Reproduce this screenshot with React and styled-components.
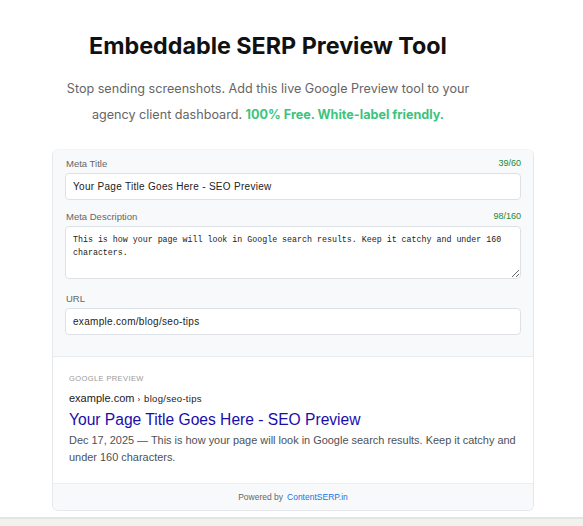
import styled, { createGlobalStyle } from "styled-components";

const GlobalStyle = createGlobalStyle`
  html, body {
    margin: 0;
    padding: 0;
    background: #ffffff;
  }
  body {
    font-family: Inter, "Liberation Sans", sans-serif;
  }
`;

const Page = styled.div`
  display: flex;
  flex-direction: column;
  min-height: 526px;
`;

const Hero = styled.header`
  width: 536px;
  text-align: center;
  padding-top: 30px;
`;

const Title = styled.h1`
  margin: 0;
  font-family: Inter, sans-serif;
  font-size: 23.3px;
  font-weight: 700;
  line-height: 32px;
  color: #111111;
`;

const Subtitle = styled.p`
  margin: 14px 0 0;
  font-family: Inter, sans-serif;
  font-size: 12.6px;
  line-height: 26px;
  color: #666666;
`;

const Highlight = styled.strong`
  color: #3cc47c;
  font-weight: 700;
`;

const Card = styled.section`
  width: 482px;
  box-sizing: border-box;
  margin: 21px 0 0 52px;
  border: 1px solid #e6e8eb;
  border-top-color: #f4f5f6;
  border-radius: 6px;
  overflow: hidden;
  background: #ffffff;
`;

const Form = styled.div`
  background: #f8f9fa;
  padding: 6px 12px 21px;
  border-bottom: 1px solid #e9ecef;
`;

const Field = styled.div`
  margin-top: ${(p) => p.$gap || 0}px;
`;

const LabelRow = styled.div`
  display: flex;
  justify-content: space-between;
  align-items: center;
  height: 14px;
  margin-bottom: 3px;
  padding-left: 1px;
`;

const Label = styled.label`
  font-family: "Liberation Sans", Arial, sans-serif;
  font-size: 9.5px;
  color: #666666;
`;

const Counter = styled.span`
  font-family: "Liberation Sans", Arial, sans-serif;
  font-size: 9px;
  color: #218838;
`;

const Input = styled.input`
  display: block;
  width: 100%;
  box-sizing: border-box;
  height: 27px;
  padding: 0 7px;
  border: 1px solid #dde1e5;
  border-radius: 4px;
  background: #ffffff;
  font-family: "Liberation Sans", Arial, sans-serif;
  font-size: 10px;
  letter-spacing: 0.3px;
  color: #222222;
  outline: none;
`;

const TextArea = styled.textarea`
  display: block;
  width: 100%;
  box-sizing: border-box;
  height: 53px;
  padding: 6px 7px;
  border: 1px solid #dde1e5;
  border-radius: 4px;
  background: #ffffff;
  font-family: "Liberation Mono", monospace;
  font-size: 8.3px;
  line-height: 13px;
  color: #222222;
  resize: vertical;
  outline: none;
`;

const Preview = styled.div`
  padding: 17px 16px 17px;
  background: #ffffff;
`;

const PreviewLabel = styled.div`
  font-family: "Liberation Sans", Arial, sans-serif;
  font-size: 7.5px;
  letter-spacing: 0.4px;
  color: #999999;
  text-transform: uppercase;
  line-height: 10px;
`;

const Breadcrumb = styled.div`
  margin-top: 7px;
  font-family: "Liberation Sans", Arial, sans-serif;
  font-size: 11px;
  line-height: 14px;
  color: #202124;
`;

const Path = styled.span`
  font-size: 9.5px;
  letter-spacing: 0.3px;
  margin-left: 4px;
`;

const Sep = styled.span`
  font-size: 8px;
  margin-left: 3px;
`;

const ResultTitle = styled.a`
  display: block;
  margin-top: 2px;
  font-family: "Liberation Sans", Arial, sans-serif;
  font-size: 15.6px;
  line-height: 22px;
  color: #1a0dab;
  text-decoration: none;
`;

const Description = styled.p`
  margin: 1px 0 0;
  font-family: "Liberation Sans", Arial, sans-serif;
  font-size: 10.95px;
  line-height: 17px;
  color: #4d5156;
`;

const PoweredBy = styled.footer`
  height: 26px;
  display: flex;
  align-items: center;
  justify-content: center;
  gap: 4px;
  background: #f8f9fa;
  border-top: 1px solid #eceef0;
  font-family: "Liberation Sans", Arial, sans-serif;
  font-size: 8.5px;
  color: #666666;
`;

const Brand = styled.a`
  color: #1a73e8;
  text-decoration: none;
`;

const BottomBand = styled.div`
  margin-top: 6px;
  flex: 1;
  min-height: 9px;
  background: #f1f1ed;
  border-top: 2px solid #e4e4e0;
`;

const title = "Your Page Title Goes Here - SEO Preview";
const description =
  "This is how your page will look in Google search results. Keep it catchy and under 160 characters.";
const url = "example.com/blog/seo-tips";

export default function App() {
  return (
    <>
      <GlobalStyle />
      <Page>
        <Hero>
          <Title>Embeddable SERP Preview Tool</Title>
          <Subtitle>
            Stop sending screenshots. Add this live Google Preview tool to your
            <br />
            agency client dashboard.{" "}
            <Highlight>100% Free. White-label friendly.</Highlight>
          </Subtitle>
        </Hero>

        <Card>
          <Form>
            <Field>
              <LabelRow>
                <Label>Meta Title</Label>
                <Counter>{title.length}/60</Counter>
              </LabelRow>
              <Input defaultValue={title} />
            </Field>
            <Field $gap={9}>
              <LabelRow>
                <Label>Meta Description</Label>
                <Counter>{description.length}/160</Counter>
              </LabelRow>
              <TextArea defaultValue={description} />
            </Field>
            <Field $gap={12}>
              <LabelRow>
                <Label>URL</Label>
              </LabelRow>
              <Input defaultValue={url} />
            </Field>
          </Form>

          <Preview>
            <PreviewLabel>Google Preview</PreviewLabel>
            <Breadcrumb>
              example.com
              <Sep>›</Sep>
              <Path>blog/seo-tips</Path>
            </Breadcrumb>
            <ResultTitle href="#">{title}</ResultTitle>
            <Description>Dec 17, 2025 — {description}</Description>
          </Preview>

          <PoweredBy>
            Powered by <Brand href="#">ContentSERP.in</Brand>
          </PoweredBy>
        </Card>

        <BottomBand />
      </Page>
    </>
  );
}
